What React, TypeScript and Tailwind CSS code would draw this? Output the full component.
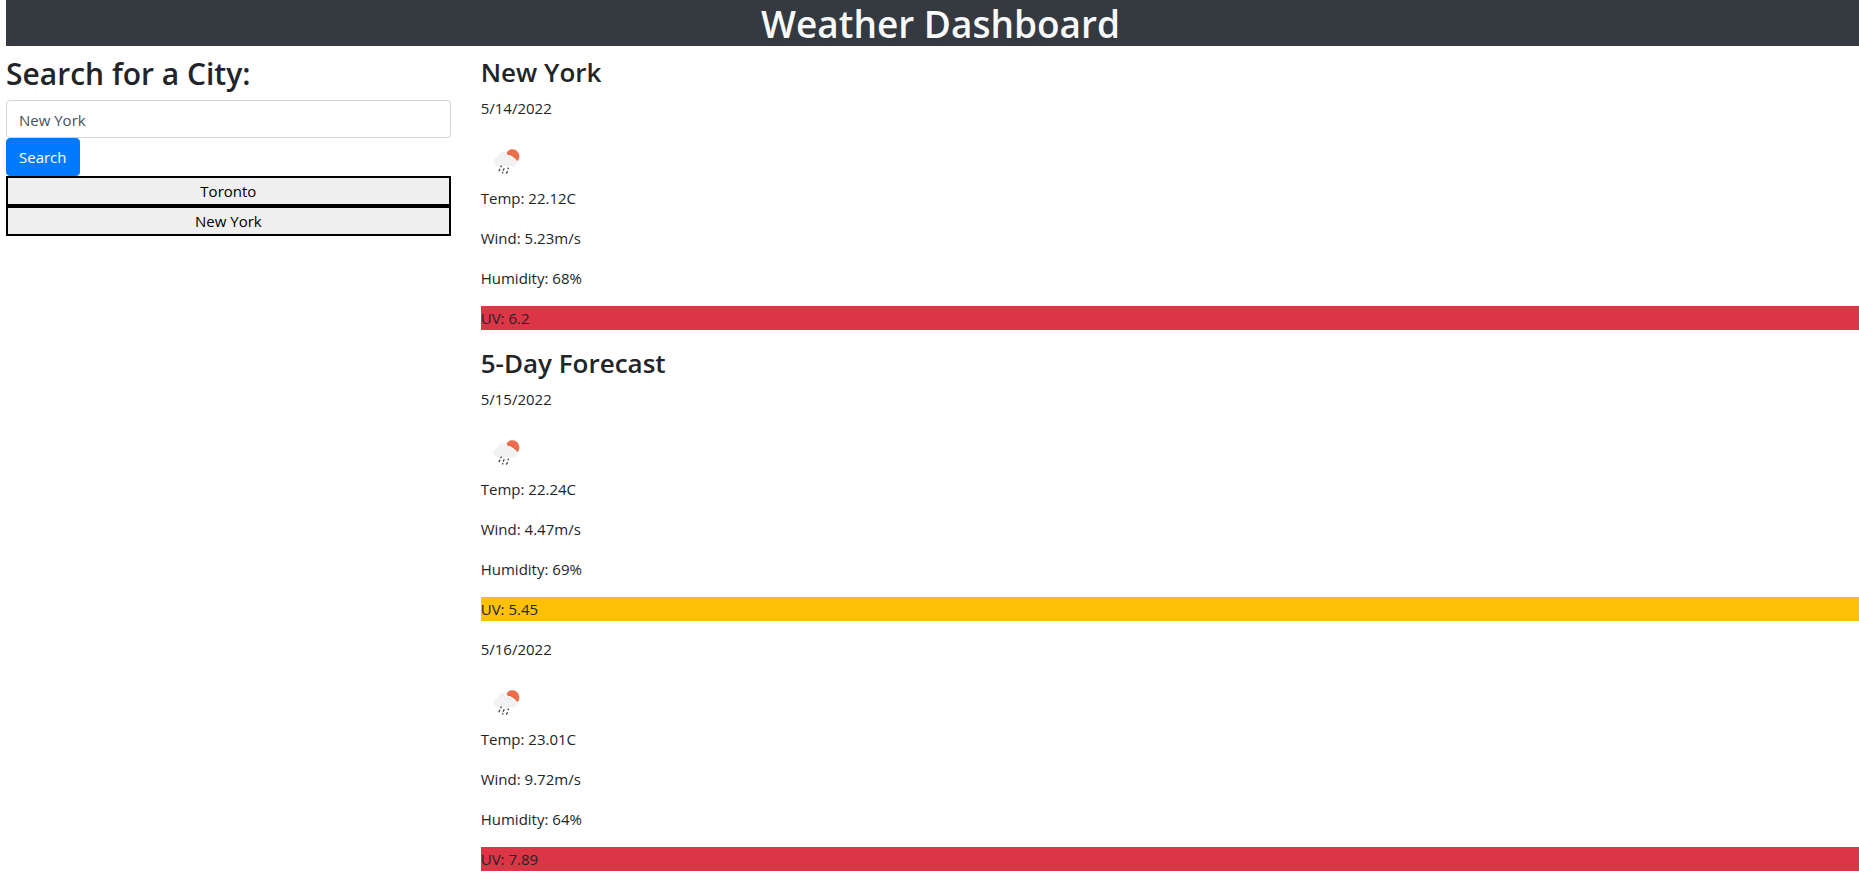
import { useState } from "react";

type Day = {
  date: string;
  temp: string;
  wind: string;
  humidity: string;
  uv: string;
  level: "high" | "moderate";
};

const today: Day = { date: "5/14/2022", temp: "22.12", wind: "5.23", humidity: "68", uv: "6.2", level: "high" };

const forecast: Day[] = [
  { date: "5/15/2022", temp: "22.24", wind: "4.47", humidity: "69", uv: "5.45", level: "moderate" },
  { date: "5/16/2022", temp: "23.01", wind: "9.72", humidity: "64", uv: "7.89", level: "high" },
];

const uvColors = { high: "bg-[#dc3545]", moderate: "bg-[#ffc107]" };

function RainIcon() {
  return (
    <svg className="block size-[50px]" viewBox="0 0 50 50" role="img" aria-label="Rain with some sun">
      <path
        d="M25.600 16.200a7 7 0 1 1 11.400 8.200l-1.300.8-.9-2.200-1.600-1-.8-1.700-1.700-.3-1.200-1.200-1.700.4-1.400-1.200z"
        fill="#ec6e4c"
      />
      <path
        d="M26.200 17.700l1.500 1.100 1.700-.4 1.200 1.200 1.600.4.8 1.600 1.500 1 .9 2"
        fill="none"
        stroke="#e8512c"
        strokeWidth="0.9"
      />
      <path
        d="M16.600 30.300a4.600 4.600 0 0 1-.2-9.100 5.400 5.400 0 0 1 10.300-2 4.800 4.800 0 0 1 5.300 3.800 3.800 3.800 0 0 1 .5 7.300c-1.500.5-3 .1-4-.6-2 1.200-4.200 1-5.600 0-2 1.100-4 1.100-6.300.6z"
        fill="#f2f2f2"
      />
      <path d="M30.500 22.500a4.200 4.200 0 0 1 5.500 5.500 4 4 0 0 1-4 2.200z" fill="#f2f2f2" />
      <g stroke="#484848" strokeWidth="1.400" strokeLinecap="round">
        <path d="M20.300 30l-.4.700M18.800 33.300l-.7 1.400M23 32.800l-.7 1.400M27.400 32.200l-.3.500M21.800 36.600l-.2.300M26.300 35.700l-.7 1.400" />
      </g>
    </svg>
  );
}

function SectionTitle({ children }: { children: string }) {
  return <h3 className="mb-[7px] pt-px text-[26px] leading-[33px] font-semibold">{children}</h3>;
}

function DayWeather({ day }: { day: Day }) {
  return (
    <div className="flex flex-col gap-4 pb-4">
      <p>{day.date}</p>
      <div>
        <RainIcon />
        <p>Temp: {day.temp}C</p>
      </div>
      <p>Wind: {day.wind}m/s</p>
      <p>Humidity: {day.humidity}%</p>
      <p className={uvColors[day.level]}>UV: {day.uv}</p>
    </div>
  );
}

export default function App() {
  const [city, setCity] = useState("New York");

  return (
    <div className="pl-1.5 font-['Open_Sans','Noto_Sans',sans-serif] text-[15px] leading-6 text-[#212529]">
      <header className="bg-[#343a40] pt-0.5 pl-4 text-center text-[#f8f9fa]">
        <h1 className="text-[37px] leading-[44px] font-semibold">Weather Dashboard</h1>
      </header>
      <div className="flex gap-[30px]">
        <aside className="w-[24%] shrink-0 pt-[9px]">
          <form onSubmit={(e) => e.preventDefault()}>
            <h2 className="mb-[7px] text-[30px] leading-[38px] font-semibold">
              <label htmlFor="city">Search for a City:</label>
            </h2>
            <input
              id="city"
              type="text"
              value={city}
              onChange={(e) => setCity(e.target.value)}
              className="block h-[38px] w-full rounded border border-[#ced4da] bg-white px-3 pt-0.5 text-[#495057] outline-none"
            />
            <button type="submit" className="block h-[38px] rounded border border-[#007bff] bg-[#007bff] px-3 text-white">
              Search
            </button>
          </form>
          {["Toronto", "New York"].map((name) => (
            <button
              key={name}
              type="button"
              onClick={() => setCity(name)}
              className="block h-[30px] w-full border-2 border-black bg-[#efefef] text-black"
            >
              {name}
            </button>
          ))}
        </aside>
        <main className="min-w-0 flex-1 pt-[9px]">
          <SectionTitle>New York</SectionTitle>
          <DayWeather day={today} />
          <SectionTitle>5-Day Forecast</SectionTitle>
          {forecast.map((day) => (
            <DayWeather key={day.date} day={day} />
          ))}
        </main>
      </div>
    </div>
  );
}
